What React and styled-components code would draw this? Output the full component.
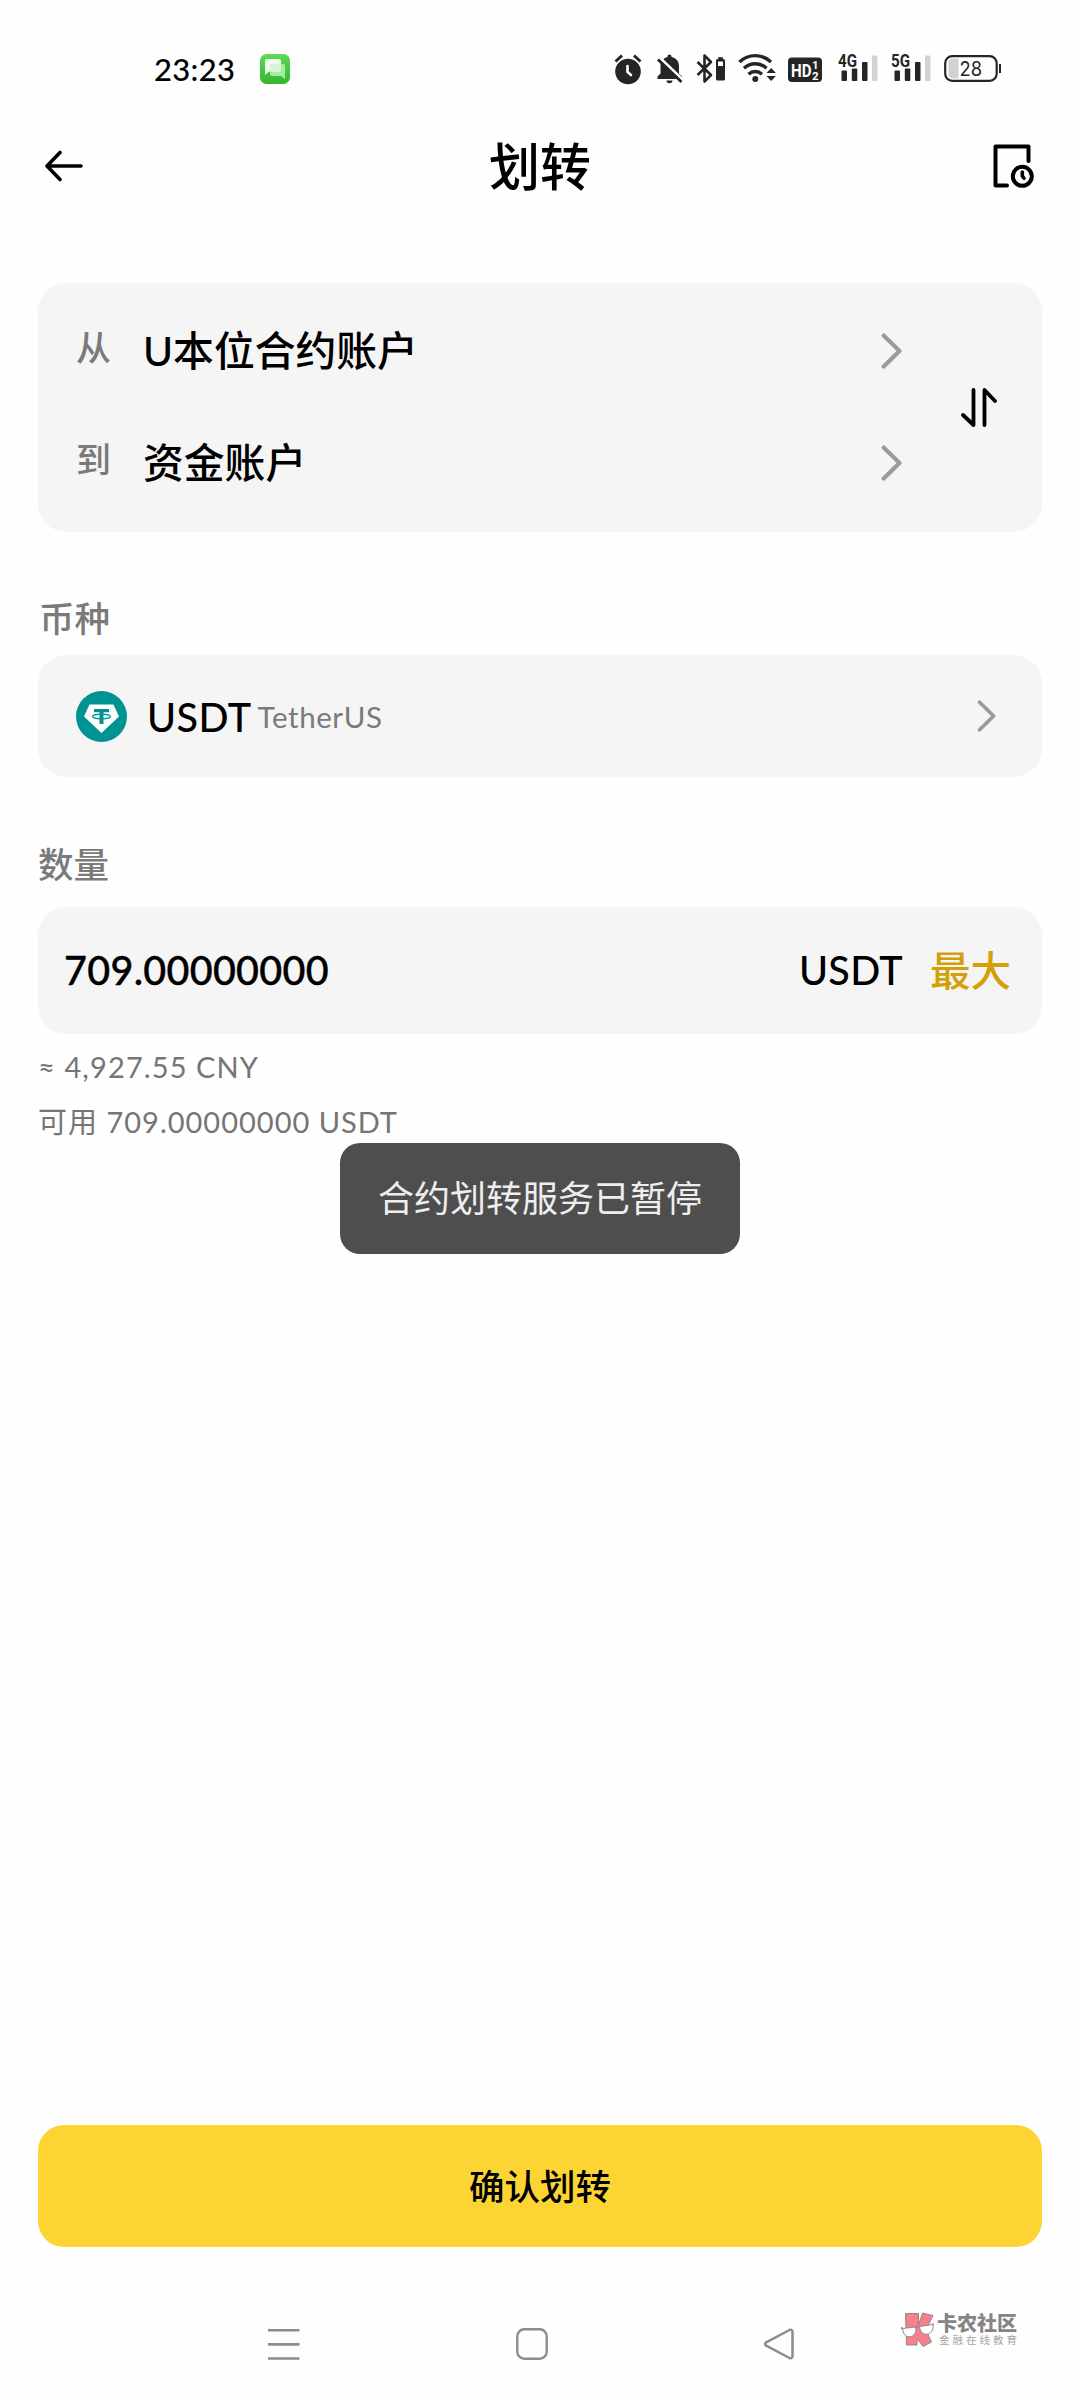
import styled, { createGlobalStyle } from "styled-components";

export default function App() {
  return (
    <>
      <GlobalStyle />
      <Screen>
        <StatusBar />
        <Header>
          <BackIcon />
          <h1>划转</h1>
          <RecordIcon />
        </Header>
        <Main>
          <AccountCard>
            <AccountList>
              <AccountRow>
                <span className="label">从</span>
                <span className="name">U本位合约账户</span>
                <Chevron width={21} height={36} />
              </AccountRow>
              <AccountRow>
                <span className="label">到</span>
                <span className="name">资金账户</span>
                <Chevron width={21} height={36} />
              </AccountRow>
            </AccountList>
            <SwapIcon />
          </AccountCard>

          <FieldLabel $top={61} $bottom={10} $left={1}>币种</FieldLabel>
          <CoinCard>
            <TetherIcon />
            <CoinName>USDT</CoinName>
            <CoinDesc>TetherUS</CoinDesc>
            <Chevron width={19} height={32} />
          </CoinCard>

          <FieldLabel $top={62} $bottom={16}>数量</FieldLabel>
          <AmountCard>
            <Amount>709.00000000</Amount>
            <Unit>USDT</Unit>
            <MaxBtn>最大</MaxBtn>
          </AmountCard>
          <Hint $spacing={1.1}>≈ 4,927.55 CNY</Hint>
          <Hint $spacing={1}>可用 709.00000000 USDT</Hint>
          <Toast>合约划转服务已暂停</Toast>
        </Main>
        <SubmitBtn>确认划转</SubmitBtn>
        <NavBar>
          <MenuIcon />
          <HomeIcon />
          <TriangleIcon />
          <Watermark>
            <WatermarkLogo />
            <div>
              <p className="name">卡农社区</p>
              <p className="slogan">金融在线教育</p>
            </div>
          </Watermark>
        </NavBar>
      </Screen>
    </>
  );
}

function StatusBar() {
  return (
    <StatusWrap>
      <Clock>23:23</Clock>
      <MessageIcon />
      <StatusIcons>
        <AlarmIcon />
        <BellOffIcon />
        <BluetoothIcon />
        <WifiIcon />
        <HdIcon />
        <SignalIcon label="4G" />
        <SignalIcon label="5G" />
        <BatteryIcon />
      </StatusIcons>
    </StatusWrap>
  );
}

//STATUS BAR ICONS
function MessageIcon() {
  return (
    <svg width="30" height="30" viewBox="0 0 30 30">
      <defs>
        <linearGradient id="msg" x1="0" y1="0" x2="0" y2="1">
          <stop offset="0" stopColor="#5fd957" />
          <stop offset="1" stopColor="#33b62c" />
        </linearGradient>
      </defs>
      <rect width="30" height="30" rx="6.5" fill="url(#msg)" />
      <path d="M11 10h12.5a1.500 1.500 0 0 1 1.500 1.500V25l-4-3H12a2 2 0 0 1-2-2z" fill="#a9e8a5" />
      <path d="M6.500 5h13a1.500 1.500 0 0 1 1.500 1.500V16a1.500 1.500 0 0 1-1.500 1.500H9L5 21V6.500A1.500 1.500 0 0 1 6.500 5z" fill="#effbee" />
      <path d="M10 17.500V10h11v6a1.500 1.500 0 0 1-1.500 1.500z" fill="#d5f4d3" />
    </svg>
  );
}

function AlarmIcon() {
  return (
    <svg width="30" height="32" viewBox="0 0 30 32">
      <circle cx="14" cy="18.500" r="12.800" fill="#252525" />
      <path d="M1.500 8.500 8 2.500M26.500 8.500 20 2.500" stroke="#252525" strokeWidth="3" />
      <path d="M13.500 13v6l3.500 3" stroke="#fff" strokeWidth="2.600" fill="none" strokeLinecap="round" />
    </svg>
  );
}

function BellOffIcon() {
  return (
    <svg width="28" height="32" viewBox="0 0 28 32">
      <path d="M13.500 1.500a2 2 0 0 1 2 2v.6c5 1 7.500 4.600 7.500 9.400v7l3 3V26H1.500v-2.500l3-3v-7c0-4.800 2.500-8.400 7-9.400v-.6a2 2 0 0 1 2-2z" fill="#252525" />
      <path d="M10.500 27.500h6a3 2.800 0 0 1-6 0z" fill="#252525" />
      <path d="M3.500 4.500 27 27" stroke="#fff" strokeWidth="3" />
      <path d="M2 6.500 25.500 29" stroke="#252525" strokeWidth="2.800" />
    </svg>
  );
}

function BluetoothIcon() {
  return (
    <svg width="30" height="32" viewBox="0 0 30 32">
      <path d="M1.500 9 15 22 8.500 28.500V2.500L15 9 1.500 22" stroke="#252525" strokeWidth="2.600" fill="none" strokeLinejoin="round" />
      <rect x="20" y="6" width="9" height="21.500" rx="1.500" fill="#252525" />
      <rect x="22.200" y="4.200" width="4.600" height="3" fill="#252525" />
      <rect x="22" y="8.500" width="5" height="4.500" fill="#fff" />
    </svg>
  );
}

function WifiIcon() {
  return (
    <svg width="38" height="32" viewBox="0 0 38 32">
      <g stroke="#252525" strokeWidth="3.400" fill="none">
        <path d="M1.500 9C10.500 .5 24 .5 33 9" />
        <path d="M6 15.200c6.500-6 16-6 22.500 0" />
        <path d="M10.500 21.200c4-3.700 9.500-3.700 13.500 0" />
      </g>
      <circle cx="17.300" cy="26" r="3" fill="#252525" />
      <path d="M28.500 20l4.700-5 4.700 5zM28.500 23l4.700 5 4.700-5z" fill="#252525" />
    </svg>
  );
}

function HdIcon() {
  return (
    <svg width="38" height="32" viewBox="0 0 38 32">
      <rect y="4.500" width="34" height="24.500" rx="4" fill="#252525" />
      <g fill="#fff" fontFamily="Roboto, sans-serif" fontWeight="700">
        <text x="3" y="23.500" fontSize="18.500" textLength="20.500" lengthAdjust="spacingAndGlyphs">HD</text>
        <text x="24" y="16" fontSize="11.500">1</text>
        <text x="24" y="26.500" fontSize="11.500">2</text>
      </g>
    </svg>
  );
}

function SignalIcon({ label }) {
  return (
    <svg width="41" height="44" viewBox="0 -6 41 44">
      <text x="0" y="13.500" fontSize="18" fontWeight="700" fontFamily="Roboto, sans-serif" fill="#252525" textLength="19" lengthAdjust="spacingAndGlyphs">{label}</text>
      <g fill="#252525">
        <rect x="3.500" y="17.500" width="5.500" height="10.500" rx="1" />
        <rect x="13.800" y="15.500" width="5.500" height="12.500" rx="1" />
        <rect x="24" y="9" width="5.500" height="19" rx="1" />
      </g>
      <rect x="34" y="2.500" width="5.500" height="25.500" rx="1" fill="#d2d2d2" />
    </svg>
  );
}

function BatteryIcon() {
  return (
    <svg width="57" height="32" viewBox="0 0 57 32">
      <path d="M14.500 5.500v20H9a4.500 4.500 0 0 1-4.500-4.500V10A4.500 4.500 0 0 1 9 5.500z" fill="#d2d2d2" />
      <rect x="1.200" y="3.200" width="51.500" height="24.600" rx="7" fill="none" stroke="#252525" strokeWidth="2.200" />
      <rect x="55" y="11" width="2" height="9" fill="#252525" />
      <text x="15.500" y="22.500" fontSize="20" fontFamily="Inter, sans-serif" fill="#252525" textLength="22.500" lengthAdjust="spacingAndGlyphs">28</text>
    </svg>
  );
}

//PAGE ICONS
function BackIcon() {
  return (
    <svg width="40" height="32" viewBox="0 0 40 32" fill="none" stroke="#000" strokeWidth="3.600" strokeLinecap="round" strokeLinejoin="round">
      <path d="M16 2.500 3 16l13 13.500M3 16h34" />
    </svg>
  );
}

function RecordIcon() {
  return (
    <svg width="42" height="46" viewBox="0 0 42 46" fill="none" stroke="#000" strokeWidth="4" strokeLinecap="round" strokeLinejoin="round">
      <path d="M14 42.500H2.500v-39h33V18" />
      <circle cx="29.300" cy="33.300" r="9.500" />
      <path d="M29.300 29v4l1.700 2.300" strokeWidth="3.600" />
    </svg>
  );
}

function Chevron(props) {
  return (
    <svg {...props} viewBox="0 0 21 36" fill="none" stroke="#9b9b9b" strokeWidth="4.200" strokeLinecap="round" strokeLinejoin="round">
      <path d="M2.700 2.500 18.500 18 2.700 33.500" />
    </svg>
  );
}

function SwapIcon() {
  return (
    <svg width="36" height="39" viewBox="0 0 36 39" fill="none" stroke="#000" strokeWidth="3.800" strokeLinecap="round" strokeLinejoin="round">
      <path d="M12.500 2v35L2 27M23.500 37V2L34 13" />
    </svg>
  );
}

function TetherIcon() {
  return (
    <svg width="51" height="51" viewBox="0 0 51 51">
      <circle cx="25.500" cy="25.500" r="25.500" fill="#009393" />
      <path d="M13.500 13.500h24L43 25.500 25.500 42 8 25.500z" fill="#fff" />
      <path d="M18 18h15v3.300h-5.500V33h-4V21.300H18z" fill="#009393" />
      <ellipse cx="25.500" cy="25.500" rx="9" ry="2.400" fill="none" stroke="#009393" strokeWidth="1.300" />
    </svg>
  );
}

function MenuIcon() {
  return (
    <svg width="32" height="32" viewBox="0 0 32 32" stroke="#8c8c8c" strokeWidth="2.600">
      <path d="M0 2.300h31.500M0 16.400h31.500M0 30.500h31.500" />
    </svg>
  );
}

function HomeIcon() {
  return (
    <svg width="32" height="32" viewBox="0 0 32 32" fill="none" stroke="#8c8c8c" strokeWidth="2.400">
      <rect x="1.300" y="1.300" width="29.400" height="29.400" rx="7" />
    </svg>
  );
}

function TriangleIcon() {
  return (
    <svg width="30" height="32" viewBox="0 0 30 32" fill="none" stroke="#8c8c8c" strokeWidth="2.500" strokeLinejoin="round">
      <path d="M2.200 14.300 25.500 2Q28.500 1 28.500 4v24q0 3-3 2L2.200 17.700Q0 16 2.200 14.300z" />
    </svg>
  );
}

function WatermarkLogo() {
  return (
    <svg width="35" height="36" viewBox="0 0 35 36" strokeLinejoin="round">
      <g fill="#f7808a" stroke="#8a8a8a" strokeWidth="1">
        <path d="M5.500 1.500h13V13L22.500 1l10.500 2.500-7 14.500 5.500 12-8.500 4.500-6-8V33H6.500z" />
      </g>
      <path d="M1 15.500l2 1.500M16 15l3-1M32 12.500l2-.5" stroke="#8a8a8a" strokeWidth="1.600" />
      <g fill="#fff" stroke="#8a8a8a" strokeWidth="1">
        <path d="M2.500 16.500 15.500 15c1.500 5-1.500 9.800-6 9.800s-6.500-3.800-7-8.300z" />
        <path d="M19.500 14.500 33 12.500c.8 5-2 9.300-6 9.800-4.200.4-7-3-7.500-7.800z" />
      </g>
    </svg>
  );
}

const GlobalStyle = createGlobalStyle`
  * {
    box-sizing: border-box;
  }
  body {
    margin: 0;
    background: #fefefe;
    font-family: Lato, "Noto Sans CJK SC", sans-serif;
    color: #000;
  }
  h1, p {
    margin: 0;
  }
  svg {
    display: block;
    flex-shrink: 0;
  }
`;

const Screen = styled.div`
  display: flex;
  flex-direction: column;
  width: 1080px;
  height: 2400px;
  overflow: hidden;
`;

const StatusWrap = styled.div`
  display: flex;
  align-items: center;
  height: 138px;
  padding: 0 79px 0 154px;
`;

const Clock = styled.span`
  width: 106px;
  font-size: 31px;
  font-weight: 500;
  letter-spacing: 0.3px;
`;

const StatusIcons = styled.div`
  display: flex;
  align-items: center;
  gap: 12px;
  margin-left: auto;
`;

const Header = styled.header`
  display: flex;
  align-items: center;
  justify-content: space-between;
  height: 56px;
  padding: 0 45px 0 44px;
  h1 {
    margin: 2px 0 0 3px;
    font-size: 51px;
    font-weight: 500;
    line-height: 56px;
  }
`;

const Main = styled.main`
  position: relative;
  padding: 89px 38px 0;
`;

const Card = styled.section`
  display: flex;
  align-items: center;
  background: #f5f5f5;
  border-radius: 28px;
`;

const AccountCard = styled(Card)`
  height: 249px;
  padding: 12px 45px 13px 38px;
`;

const AccountList = styled.div`
  flex: 1;
  margin-right: 59px;
`;

const AccountRow = styled.div`
  display: flex;
  align-items: center;
  height: 112px;
  .label {
    width: 67px;
    margin-top: -11px;
    font-size: 35px;
    font-weight: 500;
    color: #7a7a7a;
  }
  .name {
    flex: 1;
    margin-top: -5px;
    font-size: 40.800px;
    font-weight: 500;
  }
`;

const FieldLabel = styled.div`
  height: 52px;
  line-height: 52px;
  margin: ${(props) => `${props.$top}px 0 ${props.$bottom}px ${props.$left || 0}px`};
  font-size: 35.500px;
  font-weight: 500;
  color: #7a7a7a;
`;

const CoinCard = styled(Card)`
  height: 122px;
  padding: 0 46px 0 38px;
`;

const CoinName = styled.span`
  margin-left: 20px;
  font-size: 39.500px;
  font-weight: 500;
  letter-spacing: 0.4px;
`;

const CoinDesc = styled.span`
  flex: 1;
  margin-left: 6px;
  font-size: 29.500px;
  letter-spacing: 0.6px;
  color: #7a7a7a;
`;

const AmountCard = styled(Card)`
  height: 127px;
  padding: 0 31px 0 26px;
  margin-bottom: 9px;
`;

const Amount = styled.span`
  flex: 1;
  margin-top: -2px;
  font-size: 39.500px;
  font-weight: 500;
  letter-spacing: 0.3px;
  -webkit-text-stroke: 0.4px currentColor;
`;

const Unit = styled.span`
  margin-top: -2px;
  font-size: 39.500px;
  font-weight: 500;
  letter-spacing: 0.3px;
`;

const MaxBtn = styled.span`
  margin: -5px 0 0 27px;
  font-size: 40.500px;
  font-weight: 500;
  color: #d49f0a;
`;

const Hint = styled.p`
  height: 55px;
  line-height: 48px;
  font-size: 29px;
  letter-spacing: ${(props) => props.$spacing}px;
  color: #757575;
  white-space: nowrap;
`;

const Toast = styled.div`
  position: absolute;
  top: 949px;
  left: 340px;
  width: 400px;
  height: 111px;
  line-height: 110px;
  border-radius: 20px;
  background: #4e4e4e;
  color: #eee;
  font-size: 36px;
  text-align: center;
`;

const SubmitBtn = styled.button`
  height: 122px;
  margin: auto 38px 0;
  padding: 0 0 4px;
  border: 0;
  border-radius: 26px;
  background: #fcd535;
  color: #000;
  font-family: inherit;
  font-size: 35.500px;
  font-weight: 500;
`;

const NavBar = styled.nav`
  position: relative;
  display: flex;
  justify-content: space-between;
  height: 153px;
  padding: 81px 286px 0 268px;
`;

const Watermark = styled.div`
  position: absolute;
  left: 900px;
  top: 65px;
  display: flex;
  gap: 2px;
  color: #858585;
  white-space: nowrap;
  .name {
    font-size: 20px;
    line-height: 22px;
    font-weight: 900;
  }
  .slogan {
    font-size: 10.500px;
    line-height: 12px;
    letter-spacing: 3px;
    padding-left: 2px;
    color: #a5a5a5;
  }
`;
